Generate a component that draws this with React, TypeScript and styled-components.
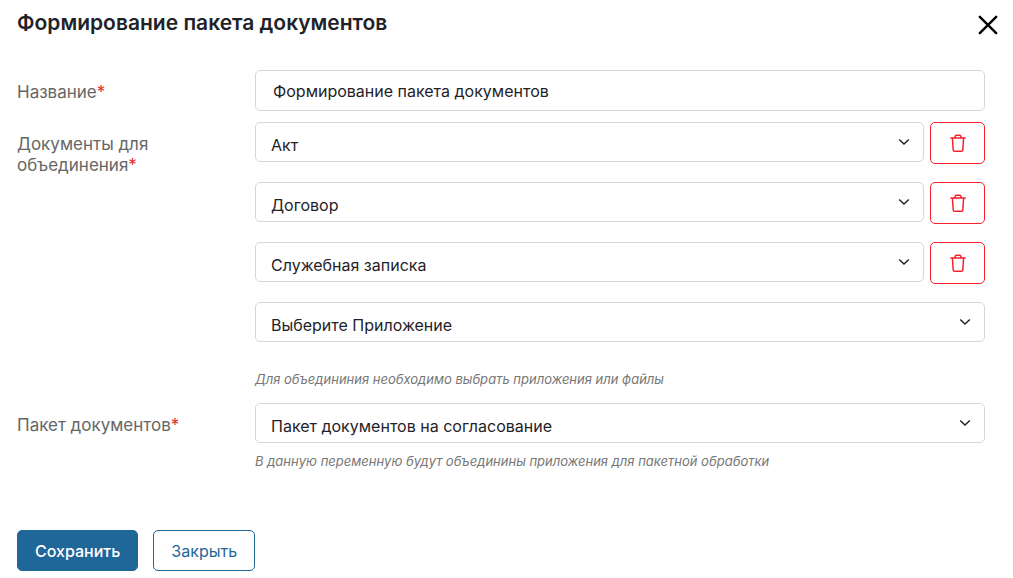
import React from "react";
import styled, { createGlobalStyle, css } from "styled-components";

const GlobalStyle = createGlobalStyle`
  *, *::before, *::after { box-sizing: border-box; }
  body {
    margin: 0;
    background: #fff;
    color: #1f2328;
    font-family: Inter, "Liberation Sans", sans-serif;
    font-size: 16px;
  }
  button, input, select { font: inherit; color: inherit; margin: 0; }
`;

const Dialog = styled.main`
  padding: 9px 28px 7px 17px;
`;

const Header = styled.header`
  display: flex;
  justify-content: space-between;
  align-items: flex-start;
  margin-bottom: 31px;
`;

const Title = styled.h1`
  margin: 0;
  font-size: 21px;
  line-height: 28px;
  font-weight: 600;
`;

const CloseButton = styled.button`
  display: flex;
  align-items: center;
  justify-content: center;
  width: 28px;
  height: 28px;
  margin: 2px -17px 0 0;
  padding: 0;
  border: 0;
  background: none;
  color: #000;
  cursor: pointer;
`;

const Form = styled.form`
  display: grid;
  gap: 11px;
`;

const FormRow = styled.div`
  display: grid;
  grid-template-columns: 238px minmax(0, 1fr);
`;

const Label = styled.label`
  max-width: 170px;
  padding-top: 12px;
  font-size: 17px;
  line-height: 21px;
  color: #666;
`;

const Required = styled.span`
  color: #e02b2b;
`;

const control = css`
  width: 100%;
  border: 1px solid #d5d6d8;
  border-radius: 5px;
  background: #fff;
  outline: none;
`;

const TextInput = styled.input`
  ${control}
  height: 41px;
  padding: 0 17px;
`;

const SelectBox = styled.div`
  display: grid;
  flex: 1;
  align-items: center;
  justify-items: end;
  > * { grid-area: 1 / 1; }
`;

const Select = styled.select`
  ${control}
  height: 40px;
  padding: 5px 44px 0 15px;
  appearance: none;
`;

const Chevron = styled.svg`
  margin-right: 14px;
  pointer-events: none;
`;

const Fields = styled.div`
  display: grid;
  gap: 18px;
`;

const DocumentRow = styled.div`
  display: flex;
  align-items: flex-start;
  gap: 6px;
`;

const DeleteButton = styled.button`
  display: flex;
  align-items: center;
  justify-content: center;
  width: 55px;
  height: 42px;
  padding: 0;
  border: 1px solid #f5222d;
  border-radius: 5px;
  background: #fff;
  color: #f5222d;
  cursor: pointer;
`;

const Hint = styled.p<{ $spaced?: boolean }>`
  margin: ${(p) => (p.$spaced ? "27px 0 3px" : "8px 0 0")};
  font-size: 13px;
  line-height: 20px;
  font-style: italic;
  color: #777;
`;

const Footer = styled.footer`
  display: flex;
  gap: 15px;
  margin-top: 59px;
`;

const ActionButton = styled.button<{ $primary?: boolean }>`
  height: 41px;
  padding: 0 17px;
  border: 1px solid #1f6699;
  border-radius: 5px;
  background: ${(p) => (p.$primary ? "#1f6699" : "#fff")};
  color: ${(p) => (p.$primary ? "#fff" : "#1f6699")};
  font-weight: ${(p) => (p.$primary ? 500 : 400)};
  cursor: pointer;
`;

function Dropdown({ id, value, label }: { id: string; value: string; label?: string }) {
  return (
    <SelectBox>
      <Select id={id} aria-label={label} defaultValue={value}>
        <option value={value}>{value}</option>
      </Select>
      <Chevron width="12" height="8" viewBox="0 0 12 8" fill="none" stroke="#1f2328" strokeWidth="1.4" aria-hidden="true">
        <path d="M1.2 1.5 6 6.1l4.8-4.6" />
      </Chevron>
    </SelectBox>
  );
}

function TrashIcon() {
  return (
    <svg width="16" height="20" viewBox="0 0 16 20" fill="none" stroke="currentColor" strokeWidth="1.5" aria-hidden="true">
      <path d="M0.3 5h15.4M4.6 4.8 5.2 3.2Q5.5 2.3 6.5 2.3h3q1 0 1.3.9l.6 1.6M2.4 5l.8 12q.1 1.3 1.2 1.3h7.2q1.1 0 1.2-1.3l.8-12" />
    </svg>
  );
}

const documents = ["Акт", "Договор", "Служебная записка"];

export default function App() {
  return (
    <>
      <GlobalStyle />
      <Dialog>
        <Header>
          <Title>Формирование пакета документов</Title>
          <CloseButton type="button" aria-label="Закрыть окно">
            <svg width="20" height="20" viewBox="0 0 20 20" fill="none" stroke="currentColor" strokeWidth="2.4" strokeLinecap="round" aria-hidden="true">
              <path d="M1.8 1.8l16.4 16.4M18.2 1.8 1.8 18.2" />
            </svg>
          </CloseButton>
        </Header>
        <Form id="package-form" onSubmit={(e) => e.preventDefault()}>
          <FormRow>
            <Label htmlFor="name">Название<Required>*</Required></Label>
            <TextInput id="name" defaultValue="Формирование пакета документов" />
          </FormRow>
          <FormRow>
            <Label htmlFor="document-0">Документы для объединения<Required>*</Required></Label>
            <div>
              <Fields>
                {documents.map((name, i) => (
                  <DocumentRow key={name}>
                    <Dropdown id={`document-${i}`} value={name} label={i ? `Документ ${i + 1}` : undefined} />
                    <DeleteButton type="button" aria-label={`Удалить: ${name}`}><TrashIcon /></DeleteButton>
                  </DocumentRow>
                ))}
                <Dropdown id="document-new" value="Выберите Приложение" label="Новый документ" />
              </Fields>
              <Hint $spaced>Для объедининия необходимо выбрать приложения или файлы</Hint>
            </div>
          </FormRow>
          <FormRow>
            <Label htmlFor="package">Пакет документов<Required>*</Required></Label>
            <div>
              <Dropdown id="package" value="Пакет документов на согласование" />
              <Hint>В данную переменную будут объединины приложения для пакетной обработки</Hint>
            </div>
          </FormRow>
        </Form>
        <Footer>
          <ActionButton type="submit" form="package-form" $primary>Сохранить</ActionButton>
          <ActionButton type="button">Закрыть</ActionButton>
        </Footer>
      </Dialog>
    </>
  );
}
